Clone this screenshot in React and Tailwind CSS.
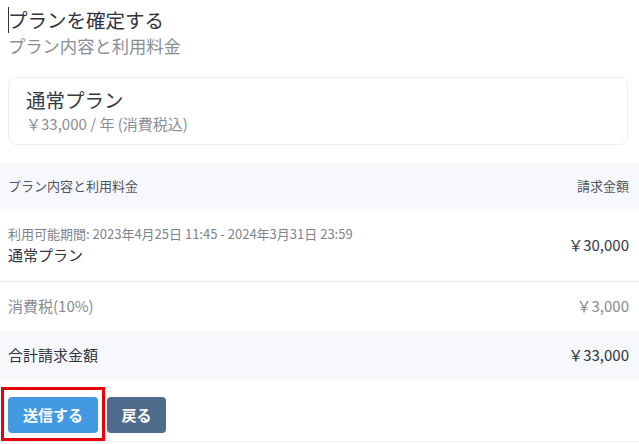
import React from 'react';

const rows = [
    { period: '利用可能期間: 2023年4月25日 11:45 - 2024年3月31日 23:59', name: '通常プラン', price: '￥30,000' },
];

const App = () => {
    return (
        <div className="w-[639px] h-[444px] bg-white overflow-hidden font-['Noto_Sans_CJK_JP','Noto_Sans',sans-serif]">
            {/* HEADER */}
            <div className="px-2 pt-[7px]">
                <h1 className="text-[19.5px] leading-[26px] text-[#2f3540] flex items-center">
                    <span className="w-px h-[26px] bg-[#2f3540] mr-[-1px]"></span>
                    プランを確定する
                </h1>
                <p className="text-[17.3px] leading-[24px] text-[#8a8f96] mt-[1px]">プラン内容と利用料金</p>
            </div>

            {/* PLAN CARD */}
            <div className="mx-2 mt-[19px] mr-[11px] h-[68px] rounded-lg border border-[#eceef1] px-[17px] pt-[9px]">
                <div className="text-[19.5px] leading-[26px] text-[#343a42]">通常プラン</div>
                <div className="text-[15px] leading-[20px] text-[#8a8f96] mt-[1px]">￥33,000 / 年 (消費税込)</div>
            </div>

            {/* TABLE */}
            <div className="mt-[18px]">
                <div className="h-[46px] bg-[#f7f8fb] flex items-center justify-between px-2 text-[13px] text-[#50565e]">
                    <span>プラン内容と利用料金</span>
                    <span className="mr-[2px]">請求金額</span>
                </div>
                {rows.map((row) => (
                    <div key={row.name} className="h-[73px] border-b border-[#e9ebee] flex items-center justify-between px-2">
                        <div className="mt-[1px]">
                            <div className="text-[13px] leading-[18px] text-[#7d838b]">{row.period}</div>
                            <div className="text-[15px] leading-[22px] text-[#2f3540] mt-[1px]">{row.name}</div>
                        </div>
                        <span className="text-[15px] text-[#343a42] mr-[2px]">{row.price}</span>
                    </div>
                ))}
                <div className="h-[49px] flex items-center justify-between px-2 text-[15px] text-[#858b93]">
                    <span>消費税(10%)</span>
                    <span className="mr-[2px]">￥3,000</span>
                </div>
                <div className="h-[49px] bg-[#f7f8fb] flex items-center justify-between px-2 text-[15px] text-[#2f3540]">
                    <span>合計請求金額</span>
                    <span className="mr-[2px]">￥33,000</span>
                </div>
            </div>

            {/* BUTTONS */}
            <div className="flex gap-[9px] px-2 pt-[17px] pb-[8px] border-b border-[#eef0f3]">
                <div className="relative">
                    <button className="w-[90px] h-[36px] rounded bg-[#4299e1] text-white text-[15px] font-bold">送信する</button>
                    <div className="absolute left-[-7px] top-[-10px] w-[104px] h-[54px] border-[3px] border-[#e8000b] pointer-events-none"></div>
                </div>
                <button className="w-[59px] h-[36px] rounded bg-[#4e6b8b] text-white text-[15px] font-bold">戻る</button>
            </div>
        </div>
    );
};

export default App;
